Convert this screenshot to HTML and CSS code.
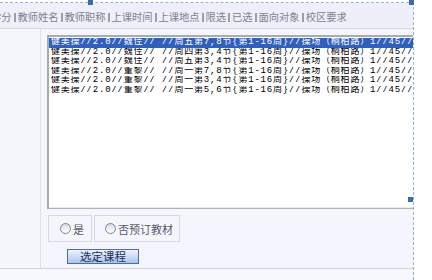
FILE: index.html
```html
<!DOCTYPE html>
<html lang="zh-CN">
<head>
    <meta charset="UTF-8">
    <title>选课</title>
    <link rel="stylesheet" href="styles.css">
</head>
<body>
    <div class="marco">
        <span class="asa asa-arriba"></span>
        <span class="asa asa-esquina"></span>
        <span class="asa asa-lado"></span>

        <div class="cabecera">
            <span>学分</span><i class="sep"></i><span>教师姓名</span><i class="sep"></i><span>教师职称</span><i class="sep"></i><span>上课时间</span><i class="sep"></i><span>上课地点</span><i class="sep"></i><span>限选</span><i class="sep"></i><span>已选</span><i class="sep"></i><span>面向对象</span><i class="sep"></i><span>校区要求</span>
        </div>

        <div class="cuerpo">
            <div class="lateral"></div>
            <div class="principal">
                <div class="lista">
                    <div class="opcion seleccionada">健美操//2.0//魏佳// //周五第7,8节{第1-16周}//操场（桐柏路）1//45//本部</div>
                    <div class="opcion">健美操//2.0//魏佳// //周四第3,4节{第1-16周}//操场（桐柏路）1//45//本部</div>
                    <div class="opcion">健美操//2.0//魏佳// //周五第3,4节{第1-16周}//操场（桐柏路）1//45//本部</div>
                    <div class="opcion">健美操//2.0//董黎// //周一第7,8节{第1-16周}//操场（桐柏路）1//45//本部</div>
                    <div class="opcion">健美操//2.0//董黎// //周一第3,4节{第1-16周}//操场（桐柏路）1//45//本部</div>
                    <div class="opcion">健美操//2.0//董黎// //周一第5,6节{第1-16周}//操场（桐柏路）1//45//本部</div>
                </div>
                <div class="opciones">
                    <label class="eleccion eleccion-si"><span class="radio"></span>是</label>
                    <label class="eleccion eleccion-no"><span class="radio"></span>否预订教材</label>
                </div>
                <button class="boton">选定课程</button>
            </div>
        </div>

        <div class="pie"></div>
    </div>
</body>
</html>
```

FILE: styles.css
```css
body {
    margin: 0;
    width: 432px;
    height: 280px;
    overflow: hidden;
    background: #fff;
    font-family: "Noto Sans CJK SC", sans-serif;
}
.marco {
    position: relative;
    width: 413px;
    margin-top: 2px;
    border-top: 1px dashed #8cb0e8;
    border-right: 1px dashed #8cb0e8;
    height: 277px;
}
.asa {
    position: absolute;
    width: 5px;
    height: 5px;
    background: #3f6aa6;
}
.asa-arriba {
    top: -3px;
    left: 88px;
}
.asa-esquina {
    top: -3px;
    left: 409px;
}
.asa-lado {
    top: 194px;
    left: 408px;
}
.cabecera {
    height: 22px;
    padding-top: 3px;
    line-height: 22px;
    background: #eeeff8;
    border-bottom: 1px solid #d6d9e4;
    white-space: nowrap;
    overflow: hidden;
    font-size: 10.25px;
    color: #7d8190;
    text-indent: -9px;
}
.sep {
    display: inline-block;
    width: 2px;
    height: 9px;
    margin: 0 2px;
    background: #9a9eab;
    vertical-align: -1px;
}
.cuerpo {
    display: flex;
    height: 239px;
}
.lateral {
    width: 40px;
    background: #f6f7fd;
    border-right: 1px solid #dde1ec;
}
.principal {
    flex: 1;
    overflow: hidden;
    background: #f5f6fd;
    padding: 6px 0 0 6px;
}
.lista {
    width: 380px;
    height: 170px;
    padding-top: 1px;
    background: #fff;
    border-top: 2px solid #a9abb0;
    border-left: 2px solid #a9abb0;
    border-bottom: 1px solid #a8b4cb;
    box-shadow: inset 0 -1px 0 #eeecdd;
    font-family: "Liberation Mono", "Noto Sans CJK SC", monospace;
    font-size: 9px;
    letter-spacing: 0.8px;
    line-height: 9.6px;
    color: #000;
}
.opcion {
    padding-left: 2px;
    white-space: nowrap;
    overflow: hidden;
}
.opcion.seleccionada {
    background: #2f60c0;
    color: #fff;
}
.opciones {
    display: flex;
    gap: 2px;
    margin-top: 6px;
    margin-left: 1px;
}
.eleccion {
    display: flex;
    align-items: center;
    height: 25px;
    border: 1px solid #d5d9e5;
    font-size: 11px;
    color: #555a66;
}
.eleccion-si {
    width: 31px;
    padding-left: 11px;
}
.eleccion-no {
    width: 74px;
    padding-left: 10px;
}
.radio {
    width: 9px;
    height: 9px;
    margin-right: 2px;
    border: 1px solid #7f8590;
    border-radius: 50%;
    background: linear-gradient(#d6dae3, #fff);
}
.boton {
    display: block;
    width: 72px;
    height: 15px;
    margin: 7px 0 0 20px;
    padding: 0;
    border: 1px solid #4f6c9e;
    background: linear-gradient(#eef4fd, #a9c5ee);
    font-family: "Noto Sans CJK SC", sans-serif;
    font-size: 11.5px;
    line-height: 13px;
    color: #1d2d5c;
    cursor: pointer;
}
.pie {
    height: 12px;
    background: #f7f8fd;
    border-top: 1px solid #d0d5e0;
}
```
